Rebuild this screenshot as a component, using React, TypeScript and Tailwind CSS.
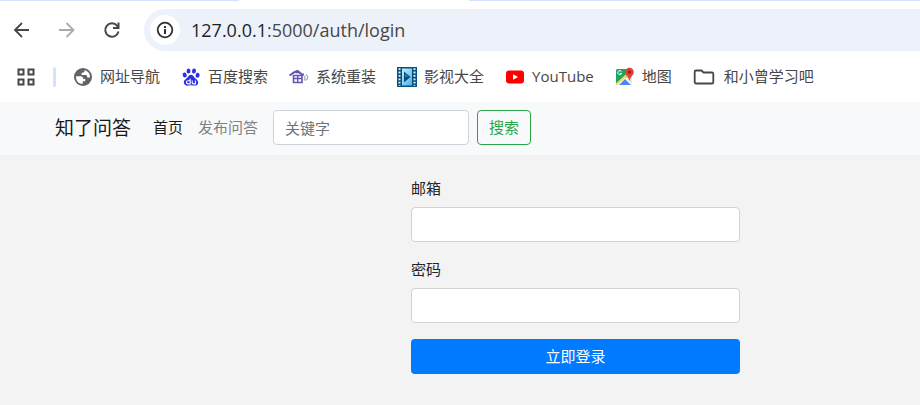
import type { ReactNode } from "react";

function BackIcon() {
  return (
    <svg viewBox="0 0 18 18" className="size-[18px]" fill="none" stroke="#474747" strokeWidth="1.800">
      <path d="M16 9H3M9 2 2 9l7 7" />
    </svg>
  );
}

function ForwardIcon() {
  return (
    <svg viewBox="0 0 18 18" className="size-[18px]" fill="none" stroke="#ababab" strokeWidth="1.800">
      <path d="M1 9h14M8.500 2l7 7-7 7" />
    </svg>
  );
}

function ReloadIcon() {
  return (
    <svg viewBox="0 0 18 18" className="size-[18px]" fill="none" stroke="#474747" strokeWidth="2">
      <path d="M15.500 10.500A6.700 6.700 0 1 1 14.200 4.800L15.500 6.200" />
      <path d="M15.500 1.500V7H10" />
    </svg>
  );
}

function InfoIcon() {
  return (
    <svg viewBox="0 0 18 18" className="size-[18px]" fill="none" stroke="#303030" strokeWidth="1.800">
      <circle cx="9" cy="9" r="7.300" />
      <path d="M9 8v5M9 5v1.900" strokeWidth="2" />
    </svg>
  );
}

function AppsIcon() {
  return (
    <svg viewBox="0 0 18 18" className="size-[18px]" fill="none" stroke="#474747" strokeWidth="2">
      <path d="M1.500 1.500h5v5h-5zM11.500 1.500h5v5h-5zM1.500 11.500h5v5h-5zM11.500 11.500h5v5h-5z" />
    </svg>
  );
}

function GlobeIcon() {
  return (
    <svg viewBox="0 0 20 20" className="size-5">
      <circle cx="10" cy="10" r="9" fill="#5f6368" />
      <path
        fill="#fff"
        d="M3 9.200h4.500c1.800 0 3 1.200 2.700 2.800h2v2.200H9.800v2.600C5.500 17 2.800 13.800 3 9.200zM11.500 3.200c.3 1.300-.5 2.300-1.700 2.500H8.600v2.200h4.300c.9 0 1.300.8 1.300 1.800v.8h2.800c.4-3.500-2-6.700-5.500-7.300z"
      />
    </svg>
  );
}

function PawIcon() {
  return (
    <svg viewBox="0 0 20 20" className="size-5" fill="#2932e1">
      <ellipse cx="7.500" cy="4" rx="2" ry="2.600" />
      <ellipse cx="13" cy="4" rx="2" ry="2.600" transform="rotate(8 13 4)" />
      <ellipse cx="3.700" cy="8" rx="2" ry="2.500" transform="rotate(-15 3.700 8)" />
      <ellipse cx="16.600" cy="8.300" rx="2" ry="2.500" transform="rotate(10 16.600 8.300)" />
      <path d="M10 7.800c1.700 0 2.400 1.200 3.300 2.400 1.300 1.700 3.900 2.900 3.900 5.200 0 2.200-1.700 3.200-3.800 3.200-1.300 0-2.200-.3-3.400-.3s-2 .4-3.300.4c-2.200 0-3.900-1.200-3.900-3.400 0-2.500 2.700-3.500 3.900-5.100C7.600 9 8.300 7.800 10 7.800z" />
      <path
        d="M9.200 11.700v5.200H7.400c-1.800 0-2-.7-2-1.700s.5-1.500 1.700-1.500h2M11.200 13.500v2.200c0 .9.400 1.200 1.200 1.200h2v-3.400"
        fill="none"
        stroke="#fff"
        strokeWidth="1.100"
      />
    </svg>
  );
}

function HouseIcon() {
  return (
    <svg viewBox="0 0 20 20" className="size-5" fill="none" stroke="#6355ae">
      <path d="M.5 8.500 5 5.500 8.500 4l4.500 3.500h2" strokeWidth="2" />
      <path d="M7 5.500h4" strokeWidth="1.500" />
      <path d="M4.500 8v7.500h8.500V8M4.500 8.500H13" strokeWidth="1.600" />
      <path d="M4.500 11.500H13M8.700 8v7.500" strokeWidth="1.400" />
      <path d="M14.800 9c1.700.8 1.700 3.200 0 4.200M16.500 7.500c3.300 1.500 3 4.500-.3 6" stroke="#a79ed3" strokeWidth="1.200" />
    </svg>
  );
}

function FilmIcon() {
  return (
    <svg viewBox="0 0 20 20" className="size-5">
      <defs>
        <linearGradient id="film" x1="0" y1="0" x2="1" y2="1">
          <stop offset="0" stopColor="#c5edfc" />
          <stop offset="1" stopColor="#47b4e8" />
        </linearGradient>
      </defs>
      <path fill="#08507f" d="M0 0h20v20H0z" />
      <path fill="url(#film)" d="M5 1.500h10v17H5z" />
      <path stroke="#d5f1fc" strokeWidth="2" strokeDasharray="1.800 1.600" d="M2.500 1.200V19M17.500 1.200V19" />
      <path fill="#07517f" d="M7 4.500 13.500 10 7 15.500z" />
      <path fill="#2489bd" d="M8 6.500 11.500 9.800H8z" />
    </svg>
  );
}

function YouTubeIcon() {
  return (
    <svg viewBox="0 0 20 20" className="size-5">
      <rect x="1" y="3.500" width="18" height="13" rx="3.200" fill="#f00" />
      <path fill="#fff" d="m8 7.200 5 2.800-5 2.800z" />
    </svg>
  );
}

function MapIcon() {
  return (
    <svg viewBox="0 0 20 20" className="size-5">
      <clipPath id="map">
        <rect x="1" y="2" width="16" height="16" rx="1.500" />
      </clipPath>
      <g clipPath="url(#map)">
        <path fill="#e8e8e8" d="M0 0h20v20H0z" />
        <path fill="#1fa362" d="M0 0h15v7L1 18z" />
        <path fill="#fff" d="m2 19 8-8.500L19 19z" />
        <path fill="#4a89f3" d="m3 19 7-7 7 7z" />
        <path stroke="#ffdc3b" strokeWidth="2" d="M0 18.500 15 5" />
      </g>
      <path d="M6.500 4.600A2 2 0 1 0 6.700 6.400H5" fill="none" stroke="#fff" strokeWidth="1" />
      <path fill="#e34133" d="M14.500.8a4.300 4.300 0 0 1 4.300 4.300c0 3.300-3.500 4.200-4.300 9.400-.8-5.200-4.300-6.100-4.300-9.400A4.300 4.300 0 0 1 14.500.8z" />
      <circle cx="14.500" cy="5" r="1.600" fill="#84251f" />
    </svg>
  );
}

function FolderIcon() {
  return (
    <svg viewBox="0 0 22 20" className="h-5 w-[22px]" fill="none" stroke="#474747" strokeWidth="1.800">
      <path d="M3 3.500h5.500L10.500 5.500H19a1.300 1.300 0 0 1 1.300 1.300v8.400a1.300 1.300 0 0 1-1.300 1.300H3a1.300 1.300 0 0 1-1.300-1.300V4.800A1.300 1.300 0 0 1 3 3.500z" />
    </svg>
  );
}

const bookmarks: { label: string; icon: ReactNode }[] = [
  { label: "网址导航", icon: <GlobeIcon /> },
  { label: "百度搜索", icon: <PawIcon /> },
  { label: "系统重装", icon: <HouseIcon /> },
  { label: "影视大全", icon: <FilmIcon /> },
  { label: "YouTube", icon: <YouTubeIcon /> },
  { label: "地图", icon: <MapIcon /> },
];

function BrowserBar() {
  return (
    <header className="bg-white">
      <div className="flex h-px bg-[#d3e3fd]">
        <div className="ml-[26%] w-1/4 bg-white" />
      </div>
      <div className="flex items-center pt-2">
        <div className="flex w-36 shrink-0 items-center gap-[27px] pl-[13px]">
          <button type="button" aria-label="后退"><BackIcon /></button>
          <button type="button" aria-label="前进"><ForwardIcon /></button>
          <button type="button" aria-label="刷新"><ReloadIcon /></button>
        </div>
        <div className="flex h-[42px] min-w-0 flex-1 items-center gap-[11px] rounded-l-full bg-[#ecf1fa] pl-1.5">
          <button type="button" aria-label="网站信息" className="flex size-[30px] shrink-0 items-center justify-center rounded-full bg-white">
            <InfoIcon />
          </button>
          <div className="truncate text-[18px] leading-6 text-[#474747]">
            <span className="text-[#1f1f1f]">127.0.0.1</span>:5000/auth/login
          </div>
        </div>
      </div>
      <nav aria-label="书签" className="flex h-[51px] items-center overflow-hidden whitespace-nowrap pl-[17px] text-[15px] text-[#474747]">
        <button type="button" aria-label="应用"><AppsIcon /></button>
        <div className="ml-[18px] mr-[17px] h-5 w-[3px] shrink-0 rounded-full bg-[#d3e3fd]" />
        <div className="flex items-center gap-[21px]">
          {bookmarks.map((b) => (
            <a key={b.label} href="#" className="flex shrink-0 items-center gap-[7px]">
              {b.icon}
              {b.label}
            </a>
          ))}
          <button type="button" className="flex shrink-0 items-center gap-[9px]">
            <FolderIcon />
            和小曾学习吧
          </button>
        </div>
      </nav>
    </header>
  );
}

function SiteNav() {
  return (
    <nav className="flex items-center whitespace-nowrap bg-[#f8f9fa] pb-[10px] pl-[55px] pt-2 text-[15px]">
      <a href="#" className="text-[19px] leading-7 text-[#1a1a1a]">知了问答</a>
      <a href="#" className="ml-[22px] text-[#1a1a1a]">首页</a>
      <a href="#" className="ml-[15px] text-[#7f8080]">发布问答</a>
      <form className="ml-[15px] flex gap-2" onSubmit={(e) => e.preventDefault()}>
        <input
          type="search"
          aria-label="关键字"
          placeholder="关键字"
          className="h-[35px] w-[196px] rounded border border-[#ced4da] bg-white px-[11px] text-[#495057] placeholder:text-[#6c757d]"
        />
        <button type="submit" className="h-[35px] rounded border border-[#28a745] px-[11px] text-[#28a745]">搜索</button>
      </form>
    </nav>
  );
}

function Field({ id, label, type }: { id: string; label: string; type: string }) {
  return (
    <div className="flex flex-col gap-2">
      <label htmlFor={id} className="leading-[22px]">{label}</label>
      <input id={id} type={type} className="h-[35px] w-full rounded border border-[#ced4da] bg-white px-[11px]" />
    </div>
  );
}

export default function App() {
  return (
    <div className="flex min-h-screen flex-col bg-[#f3f3f3] font-['Open_Sans','Noto_Sans_CJK_SC',sans-serif]">
      <BrowserBar />
      <SiteNav />
      <main className="grid grid-cols-[411fr_329fr_180fr] pt-[22px] text-[15px] text-[#212529]">
        <form className="col-start-2 flex flex-col gap-4" onSubmit={(e) => e.preventDefault()}>
          <Field id="email" label="邮箱" type="email" />
          <Field id="password" label="密码" type="password" />
          <button type="submit" className="h-[35px] rounded bg-[#007bff] text-white">立即登录</button>
        </form>
      </main>
    </div>
  );
}
